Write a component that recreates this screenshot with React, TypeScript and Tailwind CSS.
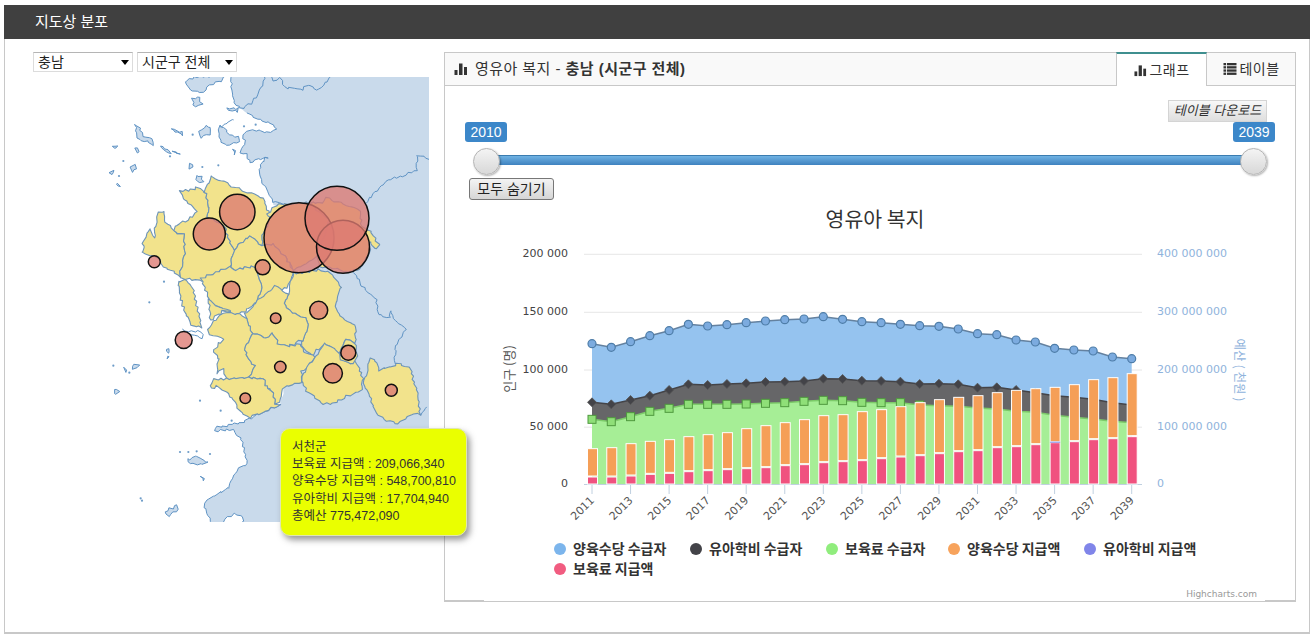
import React from "react";

const X = (i: number) => 592 + i * 19.275;
const Y = (z: number) => 240 + z / 3;
const blue = [311,322,305,287,272,253,258,254,248,243,239,237,230,238,245,248,253,257,259,267,281,284,300,306,325,330,333,351,356];
const dark = [487,493,480,467,450,433,435,432,430,426,425,423,416,417,422,423,425,432,431,433,443,442,450,458,467,472,478,488,495];
const green = [538,545,530,514,505,493,493,493,492,490,488,484,481,482,487,488,488,495,497,499,504,507,514,517,526,532,537,544,548];
const barTop = [626,623,611,604,599,590,584,578,566,557,548,539,527,524,515,509,500,488,479,472,467,458,451,446,442,434,419,413,401];
const barMid = [708,708,705,700,697,692,689,686,683,680,674,671,665,662,659,653,648,644,638,632,629,620,617,611,605,602,596,593,587];

const line = (a: number[]) => a.map((z, i) => `${i ? "L" : "M"}${X(i).toFixed(1)} ${Y(z).toFixed(1)}`).join(" ");
const area = (a: number[]) => `${line(a)} L${X(28)} 484 L${X(0)} 484 Z`;

const LEFT = ["0", "50 000", "100 000", "150 000", "200 000"];
const RIGHT = ["0", "100 000 000", "200 000 000", "300 000 000", "400 000 000"];
const GRID = [484.3, 427.2, 370, 312.3, 254.3];
const LEGEND: [number, number, string, string][] = [
  [560, 549, "#7cb5ec", "양육수당 수급자"],
  [696, 549, "#434348", "유아학비 수급자"],
  [832, 549, "#90ed7d", "보육료 수급자"],
  [954, 549, "#f7a35c", "양육수당 지급액"],
  [1090, 549, "#8085e9", "유아학비 지급액"],
  [560, 569, "#f15c80", "보육료 지급액"],
];

function BarIcon({ className }: { className?: string }) {
  return (
    <svg viewBox="0 0 14 14" className={className} fill="#333">
      <rect x="0.5" y="8" width="3" height="5" />
      <rect x="5" y="1.5" width="3.5" height="11.5" />
      <rect x="10" y="5" width="3" height="8" />
    </svg>
  );
}

function ListIcon({ className }: { className?: string }) {
  return (
    <svg viewBox="0 0 14 14" className={className} fill="#333">
      {[1, 4.2, 7.4, 10.6].map((y) => (
        <g key={y}>
          <rect x="0.5" y={y} width="2.6" height="2.3" />
          <rect x="4" y={y} width="9.5" height="2.3" />
        </g>
      ))}
    </svg>
  );
}

function Chart() {
  const sans = "'DejaVu Sans', sans-serif";
  const kr = "'Noto Sans CJK KR', sans-serif";
  return (
    <svg viewBox="445 200 850 401" className="block w-[850px] h-[401px]">
      <text x="875" y="227" textAnchor="middle" fontSize="20.5" fill="#333" fontFamily={kr}>영유아 복지</text>
      {GRID.slice(1).map((y) => (
        <line key={y} x1="584" x2="1142" y1={y} y2={y} stroke="#e6e6e6" />
      ))}
      {GRID.map((y, i) => (
        <g key={y} fontFamily={sans} fontSize="11">
          <text x="568" y={y + 3} textAnchor="end" fill="#444">{LEFT[i]}</text>
          <text x="1157" y={y + 3} fill="#8fb3dc">{RIGHT[i]}</text>
        </g>
      ))}
      <text transform="translate(514 369) rotate(-90)" textAnchor="middle" fontSize="13" fill="#555" fontFamily={kr}>인구 (명)</text>
      <text transform="translate(1235 370) rotate(90)" textAnchor="middle" fontSize="12.5" fill="#8fb3dc" fontFamily={kr}>예산 ( 천원 )</text>

      <path d={area(blue)} fill="#95c3ef" />
      <path d={area(dark)} fill="#666668" />
      <path d={area(green)} fill="#a6ee96" />
      <line x1="584" x2="1142" y1="484.5" y2="484.5" stroke="#c0d0e0" />
      {blue.map((_, i) =>
        i % 2 === 0 ? (
          <g key={i}>
            <line x1={X(i)} x2={X(i)} y1="484" y2="494" stroke="#c0d0e0" />
            <text
              transform={`translate(${X(i) + 3} 501) rotate(-45)`}
              textAnchor="end"
              fontSize="11"
              fill="#555"
              fontFamily={sans}
            >
              {2011 + i}
            </text>
          </g>
        ) : null,
      )}

      <path d={line(dark)} fill="none" stroke="#444448" strokeWidth="1.5" />
      <path d={line(green)} fill="none" stroke="#7ccb69" strokeWidth="1.5" />
      <path d={line(blue)} fill="none" stroke="#64819f" strokeWidth="1.5" />
      {green.map((z, i) => (
        <rect key={i} x={X(i) - 4} y={Y(z) - 4} width="8" height="8" fill="#8fdf78" stroke="#4f9a3f" strokeWidth="1" />
      ))}
      {dark.map((z, i) => (
        <path key={i} d={`M${X(i)} ${Y(z) - 4.5} l4.5 4.5 l-4.5 4.5 l-4.5 -4.5 Z`} fill="#434348" stroke="#555" strokeWidth="0.8" />
      ))}
      {blue.map((z, i) => (
        <circle key={i} cx={X(i)} cy={Y(z)} r="4" fill="#7cabdf" stroke="#4e7da8" strokeWidth="1.2" />
      ))}

      {barTop.map((z, i) => (
        <g key={i} stroke="#fff" strokeWidth="1">
          <rect x={X(i) - 4.5} y={Y(z)} width="10" height={Y(barMid[i]) - Y(z)} fill="#f59f57" />
          <rect x={X(i) - 4.5} y={Y(barMid[i]) + 1} width="10" height={484 - Y(barMid[i]) - 1} fill="#f0527f" />
          {i === 24 ? <rect x={X(i) - 4.5} y={Y(barMid[i])} width="10" height="1" fill="#8085e9" stroke="none" /> : null}
        </g>
      ))}

      {LEGEND.map(([x, y, c, t]) => (
        <g key={t}>
          <circle cx={x} cy={y} r="6" fill={c} />
          <text x={x + 13} y={y + 5} fontSize="14" fontWeight="700" fill="#333" fontFamily={kr}>{t}</text>
        </g>
      ))}
      <text x="1257" y="597" textAnchor="end" fontSize="9" fill="#999" fontFamily={sans}>Highcharts.com</text>
    </svg>
  );
}

type Pt = number[];
const parse = (s: string, ox = 0, oy = 0, k = 1): Pt[] =>
  s.trim().split(/\s+/).map((p) => {
    const [a, b] = p.split(",").map(Number);
    return [ox + a * k, oy + b * k];
  });
const wob = (x: number, y: number): Pt => [
  x + 0.9 * Math.sin(x * 1.3 + y * 0.7) + 0.55 * Math.sin(x * 0.37 - y * 2.1),
  y + 0.9 * Math.sin(y * 1.1 - x * 0.9) + 0.55 * Math.sin(y * 0.41 + x * 1.9),
];
const rough = (pts: Pt[], closed: boolean) => {
  const out: string[] = [];
  const n = closed ? pts.length : pts.length - 1;
  for (let i = 0; i < n; i++) {
    const a = pts[i];
    const b = pts[(i + 1) % pts.length];
    const steps = Math.max(1, Math.round(Math.hypot(b[0] - a[0], b[1] - a[1]) / 3));
    for (let j = 0; j < steps; j++) {
      const [x, y] = wob(a[0] + ((b[0] - a[0]) * j) / steps, a[1] + ((b[1] - a[1]) * j) / steps);
      out.push(`${x.toFixed(1)},${y.toFixed(1)}`);
    }
  }
  if (!closed) {
    const e = pts[pts.length - 1];
    const [x, y] = wob(e[0], e[1]);
    out.push(`${x.toFixed(1)},${y.toFixed(1)}`);
  }
  return out.join(" ");
};
const K = 1 / 3;
const z8 = (s: string) => parse(s, 130, 170, K);
const z9 = (s: string) => parse(s, 160, 290, K);
const z10 = (s: string) => parse(s, 100, 77, K);
const z2 = (s: string) => parse(s, 100, 270, K);

const mainSea =
  "265,60 445,60 445,540 243,540 243,517 233,513 223,522 214,530 205,507 207,500 230,487 237,470 248,463 240,437 233,430 215,431 215,428 243,422 257,415 280,405 300,300 280,215 273,202 268,193 265,185 259,177 260,164 268,157 258,159 250,163 247,155 240,152 245,144 242,135 250,130 267,132 277,129 268,122 257,119 247,112 240,109 233,100 232,90 230,60";

const z8Land = [
  "35,220 50,205 60,175 72,205 85,130 105,125 100,150 120,165 130,180 160,195 163,250 150,325 130,305 100,290 90,270 60,255 40,250 45,235",
  "150,65 200,55 225,65 238,125 232,140 285,170 300,220 310,240 300,290 215,330 150,325 163,250 160,195 130,180 140,165 175,150 200,125 170,95 160,85",
  "225,65 240,20 290,40 350,65 400,85 415,125 420,140 400,190 395,225 360,198 325,225 310,240 300,220 285,170 232,140 238,125",
  "410,130 440,105 500,100 575,100 600,150 570,230 560,260 530,280 490,300 470,265 430,225 395,225 400,190 420,140",
  "540,100 575,100 590,85 640,100 690,125 695,170 720,185 750,225 735,238 718,212 718,250 690,300 640,305 600,290 570,290 560,260 600,150",
  "325,225 360,198 395,225 430,225 470,265 490,305 475,345 430,385 385,390 395,345 375,290 310,300 300,290 310,240",
  "215,325 300,290 310,300 375,290 395,345 385,390 345,425 305,435 240,395 225,360",
  "143,335 170,331 190,360 210,440 215,470 190,470 165,430 150,370",
];
const z9Land = [
  "385,10 400,-50 475,-60 510,-50 545,-10 525,45 540,80 585,105 585,160 560,150 540,190 500,160 470,180 460,195 425,175 425,150 445,105 440,85 395,70 370,40",
  "255,72 295,30 345,-10 385,10 370,40 395,70 440,85 445,105 425,150 385,170 355,160 335,128 320,145 275,130 258,85",
  "145,120 160,95 195,65 240,72 258,85 275,130 255,170 265,205 285,225 265,265 200,265 190,240 170,250 178,210 160,180 190,150 150,130",
  "275,130 320,145 335,128 355,160 385,170 420,160 430,185 465,205 425,245 428,280 405,280 370,295 355,335 345,340 340,310 315,290 310,265 265,265 285,225 265,205 255,170",
  "155,285 165,270 200,265 310,265 318,292 340,310 345,340 360,345 290,375 270,385 245,370 230,345 205,310 170,290 155,295",
  "428,250 465,205 490,160 500,160 530,180 550,210 570,225 585,210 610,265 605,300 560,320 520,340 490,340 440,300 428,280",
  "610,280 630,205 640,205 660,240 720,220 750,235 770,300 780,375 760,370 715,400 680,390 650,370 625,310",
  "540,200 560,150 585,160 590,205 570,225 545,210",
  "145,30 215,70 195,60 175,75 150,90",
];
const z10Isles = [
  "255,15 275,3 382,-10 365,10 330,25 300,50 270,35",
  "380,95 418,95 415,102 382,102",
  "275,65 295,58 305,80 290,90 280,85",
  "105,142 118,155 130,175 155,188 162,203 140,195 115,190 108,170",
  "215,155 250,165 250,172 225,165",
  "298,165 315,145 333,150 330,170 310,175 303,185",
  "358,145 375,150 385,175 415,180 420,195 400,200 380,205 360,190 355,170",
  "38,212 55,202 55,208 42,215",
  "106,217 114,211 120,220 113,228",
  "94,272 105,265 110,275 98,284",
  "178,210 205,218 215,228 200,226",
  "218,224 238,228 232,233",
  "266,263 276,262 278,271 268,272",
  "290,298 305,298 308,315 292,312",
  "28,283 40,278 35,292",
  "50,315 58,325 52,330",
  "400,218 407,222 404,232",
];
const z10Dots = [[432, 148], [467, 143], [278, 173], [307, 270], [355, 265], [70, 252], [57, 297], [210, 238]];
const z2Isles = [
  "197,238 207,238 204,252",
  "202,258 210,260 205,268",
  "42,360 56,365 48,374",
  "72,293 80,303 74,305",
  "96,288 115,285 112,296 100,297",
  "262,570 285,560 325,575 300,585 270,582",
  "195,725 232,705 235,718 205,738",
  "305,618 316,622 308,632",
];
const z2Dots = [[192, 35], [148, 97], [40, 287], [88, 308], [300, 392], [362, 422], [395, 452], [240, 546], [265, 546], [290, 544], [330, 552], [122, 685], [126, 692]];

const circles: [number, number, number][] = [
  [299, 237.7, 35],
  [343, 246.7, 26.5],
  [337, 218.3, 32],
  [237.3, 212, 17.7],
  [209.3, 234, 16],
  [262.7, 267.3, 7.5],
  [231.3, 290, 8.7],
  [154.3, 261.7, 6],
  [183.7, 340, 8.5],
  [318.7, 310.3, 9],
  [275.7, 318.3, 5.3],
  [348.3, 352.7, 7.5],
  [332.7, 373.3, 9.7],
  [280.3, 367, 5.7],
  [391.3, 390.3, 6],
  [245.3, 398.3, 5.3],
];

function MapSvg() {
  const yellow = { fill: "#f2e38c", stroke: "#6d94b8", strokeWidth: 1.1, strokeLinejoin: "round" as const };
  const sea = { fill: "#c9daeb", stroke: "#5f93c4", strokeWidth: 1, strokeLinejoin: "round" as const };
  const ln = { fill: "none", stroke: "#5f93c4", strokeWidth: 1, strokeLinejoin: "round" as const };
  const Line = ({ pts }: { pts: Pt[] }) => <polyline points={rough(pts, false)} {...ln} />;
  return (
    <svg viewBox="5 77 434 446" className="block w-[434px] h-[446px]">
      <defs>
        <clipPath id="mapFrame">
          <rect x="5" y="77" width="424" height="445" />
        </clipPath>
      </defs>
      <g clipPath="url(#mapFrame)">
        <polygon points={rough(parse(mainSea), true)} fill="#c9daeb" />
        <Line pts={parse("265,60 263,85 257,97 248,105 240,109 233,100 232,90 230,60")} />
        <Line pts={parse("247,112 257,119 268,122 277,129 267,132 250,130 242,135 245,144 240,152 247,155 250,163 258,159 268,157 260,164 259,177 265,185 268,193 273,202 283,204")} />
        <Line pts={parse("205,507 207,500 230,487 237,470 248,463 240,437 233,430 215,431 215,428 243,422 257,415 280,405")} />
        <Line pts={parse("214,530 205,507")} />
        <Line pts={parse("243,540 243,517 233,513 223,522")} />
        {z10Isles.map((p) => <polygon key={p} points={rough(z10(p), true)} {...sea} />)}
        {z10Dots.map(([x, y]) => <circle key={x} cx={100 + x * K} cy={77 + y * K} r="1.1" fill="#6d9cc8" />)}
        <Line pts={z10("358,150 380,140 400,125")} />
        <Line pts={z10("510,-10 520,12 540,5 560,35 580,30 600,40 630,22 650,42 670,25 700,-10")} />
        <Line pts={parse("366,203 377,190 388,180 400,177 417,170 418,155 435,160")} />
        {z2Isles.map((p) => <polygon key={p} points={rough(z2(p), true)} {...sea} />)}
        {z2Dots.map(([x, y]) => <circle key={`${x}-${y}`} cx={100 + x * K} cy={270 + y * K} r="1.1" fill="#6d9cc8" />)}
        {z8Land.map((p) => <polygon key={p} points={rough(z8(p), true)} {...yellow} />)}
        {z9Land.map((p) => <polygon key={p} points={rough(z9(p), true)} {...yellow} />)}
        <Line pts={z9("580,-60 600,-20 630,10 650,30 655,75 690,85 690,60 710,100 740,115 710,160 705,220")} />
        <Line pts={z9("65,115 85,125 125,125 130,145 110,140 90,130")} />
        <Line pts={z9("780,375 800,350")} />
      </g>
      {circles.map(([cx, cy, r]) => (
        <circle key={`${cx}`} cx={cx} cy={cy} r={r} fill="#dc7a72" fillOpacity="0.78" stroke="#111" strokeWidth="1.5" />
      ))}
    </svg>
  );
}

function Select({ label }: { label: string }) {
  return (
    <div className="relative w-[100px] h-[20px]">
      <select
        defaultValue={label}
        className="block w-full h-full appearance-none border border-[#dcdcdc] border-t-[#b5b5b5] bg-white pl-[4px] text-[14px] leading-[18px] text-[#222]"
      >
        <option>{label}</option>
      </select>
      <span className="absolute right-[4px] top-[8px] w-0 h-0 border-x-[4px] border-t-[5px] border-x-transparent border-t-black" />
    </div>
  );
}

export default function App() {
  return (
    <div className="w-[1316px] h-[642px] bg-white pt-[5px] pl-[4px] text-[#333] overflow-hidden [font-family:'Liberation_Sans','Noto_Sans_CJK_KR',sans-serif]">
      <div className="w-[1306px] h-[34px] bg-[#404040] pl-[31px] text-[15px] leading-[34px] text-white">지도상 분포</div>
      <div className="w-[1306px] h-[595px] flex items-start border-x border-[#c8c8c8] border-b-2 pt-[13px]">
        <div className="relative w-[439px] shrink-0">
          <div className="flex gap-[4px] pl-[28px]">
            <Select label="충남" />
            <Select label="시군구 전체" />
          </div>
          <div className="mt-[5px]">
            <MapSvg />
          </div>
          <div className="absolute left-[275px] top-[376px] z-10 w-[187px] h-[108px] rounded-[10px] border border-[#dfe6b0] bg-[#eaff00] pl-[11px] pt-[10px] text-[12.5px] leading-[17.2px] text-[#333] shadow-[3px_4px_6px_rgba(70,70,70,0.55)]">
            <div>서천군</div>
            <div>보육료 지급액 : 209,066,340</div>
            <div>양육수당 지급액 : 548,700,810</div>
            <div>유아학비 지급액 : 17,704,940</div>
            <div>총예산 775,472,090</div>
          </div>
        </div>
        <div className="relative w-[852px] h-[550px] shrink-0 border border-[#c8c8c8] flex flex-col">
          <div className="h-[33px] shrink-0 flex items-stretch justify-between bg-[#f9f9f9] border-b border-[#c8c8c8]">
            <div className="flex items-center gap-[7px] pl-[9px] text-[15px] tracking-[0.45px]">
              <BarIcon className="w-[14px] h-[14px]" />
              <span>
                영유아 복지 - <b>충남 (시군구 전체)</b>
              </span>
            </div>
            <div className="flex text-[14px] tracking-[0.4px]">
              <div className="relative -mt-px -mb-px w-[91px] h-[34px] flex items-center justify-center gap-[3px] bg-white border-t-2 border-t-[#3f8f8f] border-x border-x-[#c8c8c8]">
                <BarIcon className="w-[13px] h-[13px]" />
                <span>그래프</span>
              </div>
              <div className="w-[88px] flex items-center justify-center gap-[3px]">
                <ListIcon className="w-[14px] h-[14px]" />
                <span>테이블</span>
              </div>
            </div>
          </div>
          <div className="relative flex-1 flex flex-col">
            <div className="flex justify-end pt-[14px] pr-[28px]">
              <button className="w-[99px] h-[22px] border border-[#d4d4d4] bg-gradient-to-b from-[#f8f8f8] to-[#dedede] text-[13px] italic text-[#333] leading-[20px]">
                테이블 다운로드
              </button>
            </div>
            <div className="flex justify-between px-[20px]">
              <span className="w-[42px] h-[20px] rounded-[3px] bg-[#3c87c9] text-center text-[14px] leading-[20px] text-white">2010</span>
              <span className="w-[42px] h-[20px] rounded-[3px] bg-[#3c87c9] text-center text-[14px] leading-[20px] text-white">2039</span>
            </div>
            <div className="relative mx-[41px] mt-[13px] h-[10px] border-t border-[#3a7cb0] bg-gradient-to-b from-[#6fb2e3] to-[#3f82bf]">
              <span className="absolute left-[-13px] top-[-8px] w-[27px] h-[27px] rounded-full border border-[#b4b4b4] bg-gradient-to-b from-[#f4f4f4] to-[#d8d8d8] shadow-[1px_1px_2px_rgba(0,0,0,0.3)]" />
              <span className="absolute right-[-13px] top-[-8px] w-[27px] h-[27px] rounded-full border border-[#b4b4b4] bg-gradient-to-b from-[#f4f4f4] to-[#d8d8d8] shadow-[1px_1px_2px_rgba(0,0,0,0.3)]" />
            </div>
            <div className="pl-[24px] mt-[13px]">
              <button className="block w-[85px] h-[22px] rounded-[3px] border border-[#777] bg-gradient-to-b from-[#f4f4f4] to-[#d6d6d6] text-[14px] leading-[20px] text-[#222]">
                모두 숨기기
              </button>
            </div>
            <Chart />
          </div>
          <span className="absolute left-0 bottom-0 w-[39px] h-px bg-[#c8c8c8]" />
          <span className="absolute right-0 bottom-0 w-[30px] h-px bg-[#c8c8c8]" />
        </div>
      </div>
    </div>
  );
}
